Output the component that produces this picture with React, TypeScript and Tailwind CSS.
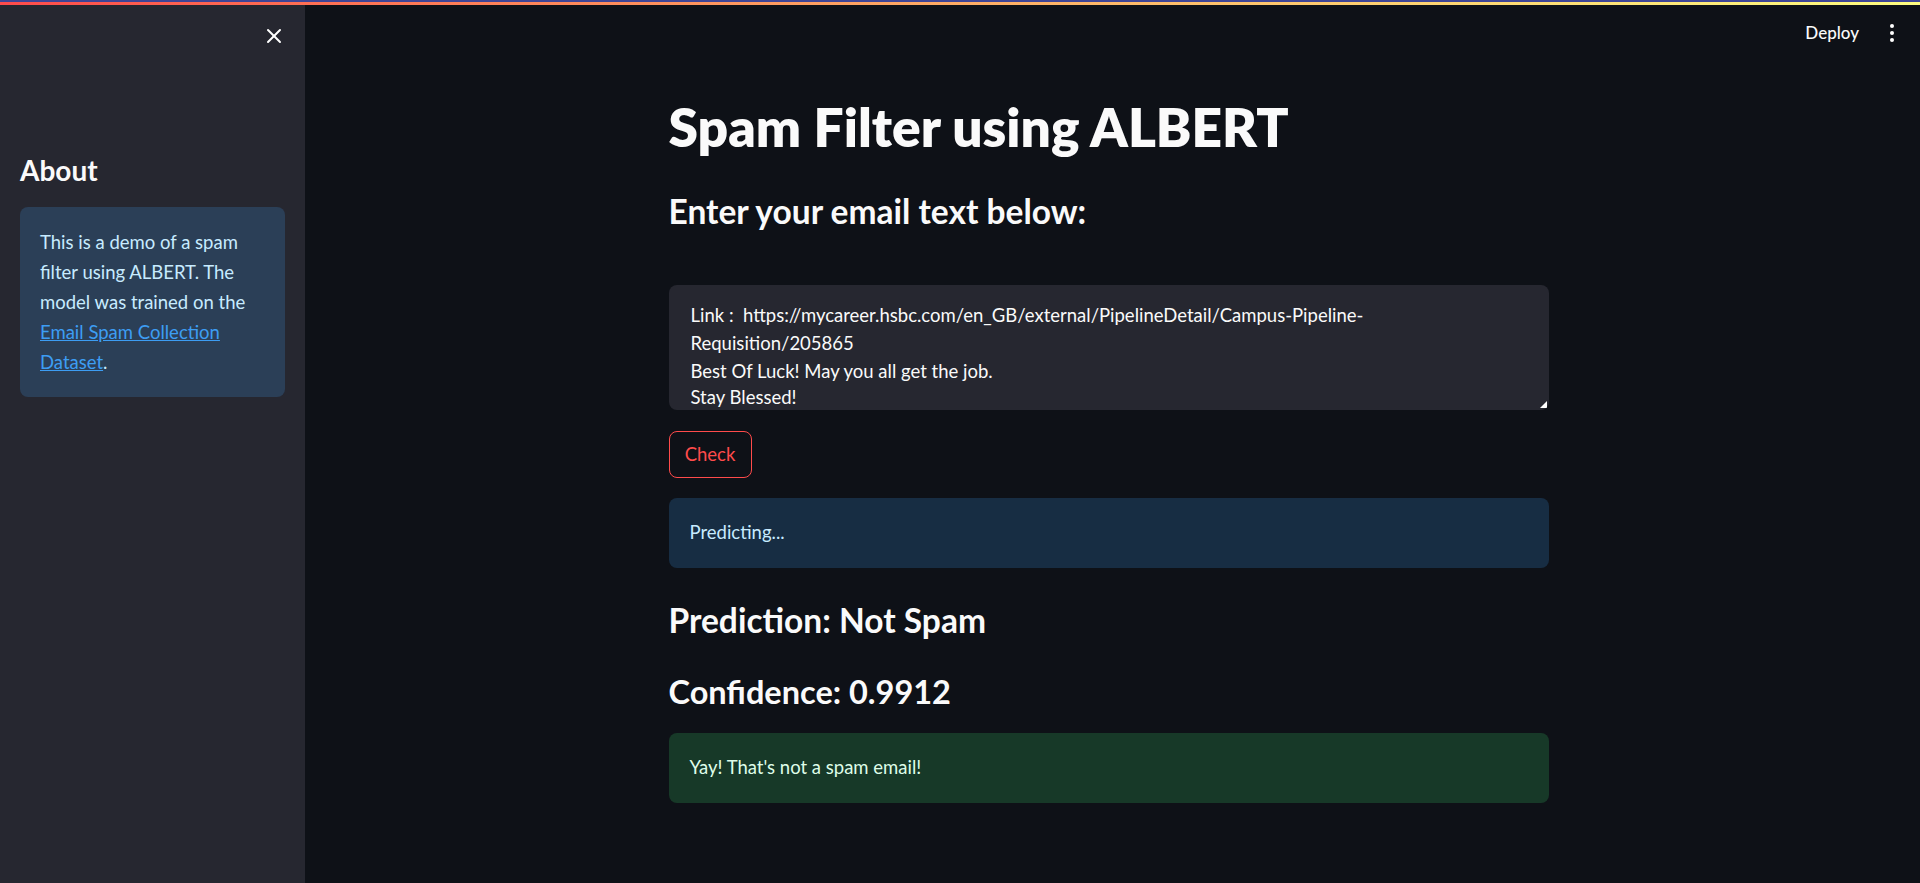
import { X } from 'lucide-react';

function Sidebar() {
  return (
    <aside className="flex w-[305px] shrink-0 flex-col bg-[#262730]">
      <div className="flex h-[62px] items-center justify-end pr-[19px]">
        <X className="h-[24px] w-[24px] text-white" strokeWidth={2} />
      </div>
      <div className="px-[20px]">
        <h2 className="mt-[85px] text-[28px] font-bold leading-[36px] text-[#fafafa]">About</h2>
        <div className="mt-[19px] rounded-[8px] bg-[#2b3f57] px-[20px] py-[20px] text-[18.5px] leading-[30px] text-[#c7ebff]">
          This is a demo of a spam
          <br />
          filter using ALBERT. The
          <br />
          model was trained on the
          <br />
          <a href="#" className="text-[#3d9df3] underline">
            Email Spam Collection
            <br />
            Dataset
          </a>
          .
        </div>
      </div>
    </aside>
  );
}

function Header() {
  return (
    <div className="flex h-[56px] items-center justify-end gap-[31px] pr-[26px]">
      <span className="text-[17px] font-medium text-[#fafafa]">Deploy</span>
      <div className="flex flex-col gap-[3px]">
        <span className="h-[4px] w-[4px] rounded-full bg-white" />
        <span className="h-[4px] w-[4px] rounded-full bg-white" />
        <span className="h-[4px] w-[4px] rounded-full bg-white" />
      </div>
    </div>
  );
}

export default function App() {
  return (
    <div className="flex h-[883px] w-full flex-col overflow-hidden bg-[#0e1117] font-['Lato',sans-serif]">
      <div className="h-[2px] bg-[#3f4596]" />
      <div className="h-[3px] bg-linear-to-r from-[#ff4b4b] to-[#fffd80]" />
      <div className="flex min-h-0 flex-1">
        <Sidebar />
        <main className="flex-1">
          <Header />
          <div className="flex justify-center pr-[8px]">
            <div className="flex w-[880px] flex-col">
              <h1 className="mt-[34px] text-[53.3px] font-extrabold leading-[62px] text-[#fafafa]">
                Spam Filter using ALBERT
              </h1>
              <h3 className="mt-[34px] text-[33.5px] font-bold leading-[40px] text-[#fafafa]">
                Enter your email text below:
              </h3>
              <div className="relative mt-[54px] h-[125px] overflow-hidden rounded-[8px] bg-[#262730] pl-[22px] pt-[16px] text-[18.5px] leading-[28px] text-[#fafafa]">
                <div>Link :&nbsp; https://mycareer.hsbc.com/en_GB/external/PipelineDetail/Campus-Pipeline-</div>
                <div>Requisition/205865</div>
                <div>Best Of Luck! May you all get the job.</div>
                <div className="leading-[24px]">Stay Blessed!</div>
                <svg className="absolute bottom-[2px] right-[2px]" width="7" height="7" viewBox="0 0 7 7">
                  <path d="M7 0 L7 7 L0 7 Z" fill="#ffffff" />
                </svg>
              </div>
              <button className="mt-[21px] h-[47px] w-[83px] rounded-[8px] border border-[#ff4b4b] bg-[#0e1117] text-[18.5px] text-[#ff4b4b]">
                Check
              </button>
              <div className="mt-[20px] flex h-[70px] items-center rounded-[8px] bg-[#172d43] px-[21px] text-[18.5px] text-[#c7ebff]">
                Predicting...
              </div>
              <h3 className="mt-[32px] text-[33.5px] font-bold leading-[40px] text-[#fafafa]">
                Prediction: Not Spam
              </h3>
              <h3 className="mt-[32px] text-[32.5px] font-bold leading-[40px] text-[#fafafa]">
                Confidence: 0.9912
              </h3>
              <div className="mt-[21px] flex h-[70px] items-center rounded-[8px] bg-[#173928] px-[21px] text-[18.5px] text-[#dffde9]">
                Yay! That's not a spam email!
              </div>
            </div>
          </div>
        </main>
      </div>
    </div>
  );
}
